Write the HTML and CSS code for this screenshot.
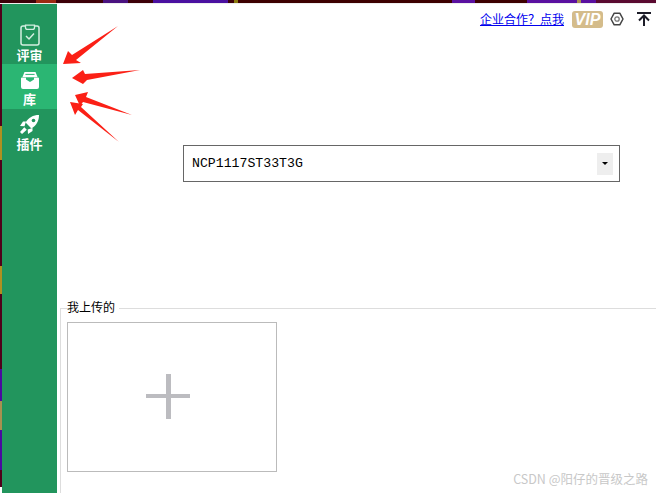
FILE: index.html
```html
<!DOCTYPE html>
<html lang="zh-CN">
<head>
    <meta charset="UTF-8">
    <meta name="viewport" content="width=device-width, initial-scale=1.0">
    <title>库</title>
    <link rel="stylesheet" href="styles.css">
</head>
<body>
    <div class="topStrip"></div>
    <div class="app">
        <div class="leftStrip"></div>
        <div class="sidebar">
            <div class="navItem navFirst">
                <svg class="navIcon" width="20" height="22" viewBox="0 0 20 22">
                    <path d="M6 2H3a2 2 0 0 0-2 2v15a2 2 0 0 0 2 2h14a2 2 0 0 0 2-2V4a2 2 0 0 0-2-2h-3" fill="none" stroke="#d3eee0" stroke-width="1.5"/>
                    <path d="M5.5 1.2h9v2.2a2 2 0 0 1-2 2h-5a2 2 0 0 1-2-2z" fill="none" stroke="#d3eee0" stroke-width="1.3"/>
                    <path d="M6 12l3 3 5-5.5" fill="none" stroke="#d3eee0" stroke-width="1.5"/>
                </svg>
                <span>评审</span>
            </div>
            <div class="navItem navActive">
                <svg class="navIcon" width="18" height="17" viewBox="0 0 18 17">
                    <path d="M3.5 0h11l2 5h-15z" fill="#fff"/>
                    <path d="M4.4 2.4h9.2" stroke="#2bb673" stroke-width="1"/>
                    <path d="M1 5.5h16a1 1 0 0 1 1 1v8.5a2 2 0 0 1-2 2H2a2 2 0 0 1-2-2V6.5a1 1 0 0 1 1-1z" fill="#fff"/>
                    <path d="M5 5.5h8v2L9 10 5 7.500z" fill="#2bb673"/>
                </svg>
                <span>库</span>
            </div>
            <div class="navItem">
                <svg class="navIcon" width="19" height="19" viewBox="0 0 19 19">
                    <path d="M19 0C13 0 8.500 2.600 5.600 7.600L11.400 13.400C16.400 10.500 19 6 19 0z" fill="#fff"/>
                    <circle cx="13.500" cy="5.500" r="1.800" fill="#22955d"/>
                    <path d="M6 6.500H3L0 11l4.500.3zM12.500 13v3L8 19l-.3-4.500zM4.300 12.200l2.500 2.500L2 19 0 17z" fill="#fff"/>
                </svg>
                <span>插件</span>
            </div>
        </div>
        <div class="main">
            <div class="topBar">
                <a class="coopLink" href="#">企业合作？点我</a>
                <span class="vipBadge">VIP</span>
                <svg class="gearIcon" width="14" height="14" viewBox="0 0 14 14">
                    <path d="M4.200 1.200h5.600L13 7l-3.200 5.800H4.200L1 7z" fill="none" stroke="#444" stroke-width="1.500" stroke-linejoin="round"/>
                    <circle cx="7" cy="7" r="2.200" fill="none" stroke="#777" stroke-width="1.300"/>
                </svg>
                <svg class="topIcon" width="14" height="14" viewBox="0 0 14 14">
                    <path d="M0 1h14" stroke="#1c1c28" stroke-width="2"/>
                    <path d="M7 14V4M2 8.500L7 3.500l5 5" fill="none" stroke="#1c1c28" stroke-width="2"/>
                </svg>
            </div>
            <div class="searchBox">
                <span class="searchText">NCP1117ST33T3G</span>
                <span class="dropBtn"><span class="dropArrow"></span></span>
            </div>
            <fieldset class="uploads">
                <legend>我上传的</legend>
                <div class="addCard">
                    <span class="plusH"></span>
                    <span class="plusV"></span>
                </div>
            </fieldset>
        </div>
    </div>

    <svg class="arrows" width="656" height="493" viewBox="0 0 656 493">
        <polygon points="63,64 68,51 72,55 118,26 76,60 81,63"/>
        <polygon points="72,78 83,70 85,74 140,70 87,80 83,84"/>
        <polygon points="75,95 88,92 86,97 132,115 83,102 80,106"/>
        <polygon points="70,102 83,104 81,107 119,142 78,110 75,115"/>
    </svg>
    <div class="watermark">CSDN @阳仔的晋级之路</div>
</body>
</html>
```

FILE: styles.css
```css
*{
    box-sizing: border-box;
}

html,body{
    height:100%;
}

body{
    margin:0;
    overflow:hidden;
    background:#fff;
    font-family:"Noto Sans CJK SC", "Liberation Sans", sans-serif;
    font-size:12px;
    color:#000;
}

/* bits of the desktop behind the window */
.topStrip{
    height:4px;
    border-bottom:1px solid #eee;
    background:linear-gradient(90deg,
        #3d0008 0, #3d0008 36px, #9c2a12 36px, #9c2a12 56px, #3d0008 56px,
        #3d0008 103px, #4a1280 103px, #4a1280 128px, #3d0008 128px,
        #3d0008 153px, #4a10a0 153px, #4a10a0 228px, #3d0008 228px,
        #3d0008 234px, #8a7a10 234px, #8a7a10 238px, #3d0000 238px,
        #3d0000 452px, #5a10a0 452px, #5a10a0 475px, #3d0000 475px,
        #3d0000 527px, #5a10a0 527px, #5a10a0 577px, #a89050 577px,
        #a89050 581px, #5a10a0 581px, #5a10a0 596px, #5a0a30 596px);
}

.app{
    display:flex;
    height:489px;
}

.leftStrip{
    width:2px;
    background:linear-gradient(180deg,
        #50001a 0, #50001a 122px, #b09020 122px, #b09020 156px, #50001a 156px,
        #50001a 262px, #b09020 262px, #b09020 290px, #50001a 290px,
        #50001a 365px, #4a0aa0 365px, #4a0aa0 397px, #a89050 397px,
        #a89050 426px, #4a0aa0 426px, #4a0aa0 466px, #50001a 466px,
        #50001a 483px, #fff 483px);
}

.sidebar{
    width:55px;
    background:#22955d;
    color:#fff;
    font-size:13px;
    font-weight:700;
}

.navItem{
    height:45px;
    display:flex;
    flex-direction:column;
    align-items:center;
    padding-top:6px;
    line-height:14px;
}

.navFirst{
    height:60px;
    padding-top:20px;
}

.navActive{
    background:#2bb673;
    padding-top:8px;
}

.navIcon{
    display:block;
    margin-bottom:2px;
}

.navItem:last-child .navIcon{
    margin-bottom:3px;
}

.navActive .navIcon{
    margin-bottom:3px;
}

.main{
    flex:1;
    padding-left:3px;
    display:flex;
    flex-direction:column;
}

.topBar{
    height:30px;
    display:flex;
    align-items:center;
    justify-content:flex-end;
    padding:0 5px 0 0;
}

.coopLink{
    color:#00e;
    line-height:16px;
}

.vipBadge{
    margin-left:8px;
    width:31px;
    height:17px;
    border-radius:3px;
    background:#d4bc8b;
    color:#fff;
    font-family:"Liberation Sans", sans-serif;
    font-size:16px;
    font-style:italic;
    font-weight:700;
    line-height:17px;
    text-align:center;
}

.gearIcon{
    margin-left:7px;
}

.topIcon{
    margin-left:13px;
}

.searchBox{
    margin:111px 0 0 123px;
    width:437px;
    height:37px;
    border:1px solid #666;
    display:flex;
    align-items:center;
    justify-content:space-between;
    padding:0 6px 0 8px;
}

.searchText{
    font-family:"Liberation Mono", monospace;
    font-size:13.2px;
}

.dropBtn{
    width:16px;
    height:22px;
    background:#eee;
    display:flex;
    align-items:center;
    justify-content:center;
}

.dropArrow{
    width:0;
    height:0;
    border-left:3px solid transparent;
    border-right:3px solid transparent;
    border-top:3px solid #000;
}

.uploads{
    margin:116px 0 0 0;
    padding:0 0 0 6px;
    border:none;
    border-top:1px solid #ddd;
    border-left:1px solid #ddd;
    min-width:0;
    flex:1;
}

.uploads legend{
    padding:0 4px 4px 0;
    line-height:17px;
}

.addCard{
    margin-top:3px;
    width:210px;
    height:150px;
    border:1px solid #bbb;
    display:grid;
    place-items:center;
}

.plusH,.plusV{
    grid-area:1 / 1;
    background:#bcbcc0;
    margin:0 8px 2px 0;
}

.plusH{
    width:44px;
    height:4px;
}

.plusV{
    width:5px;
    height:45px;
}

/* annotations drawn on top of the screenshot */
.arrows{
    position:absolute;
    left:0;
    top:0;
    pointer-events:none;
}

.arrows polygon{
    fill:#fb2016;
}

.watermark{
    position:absolute;
    right:8px;
    bottom:6px;
    color:#c8c8c8;
    font-size:12.5px;
    line-height:16px;
}
```
